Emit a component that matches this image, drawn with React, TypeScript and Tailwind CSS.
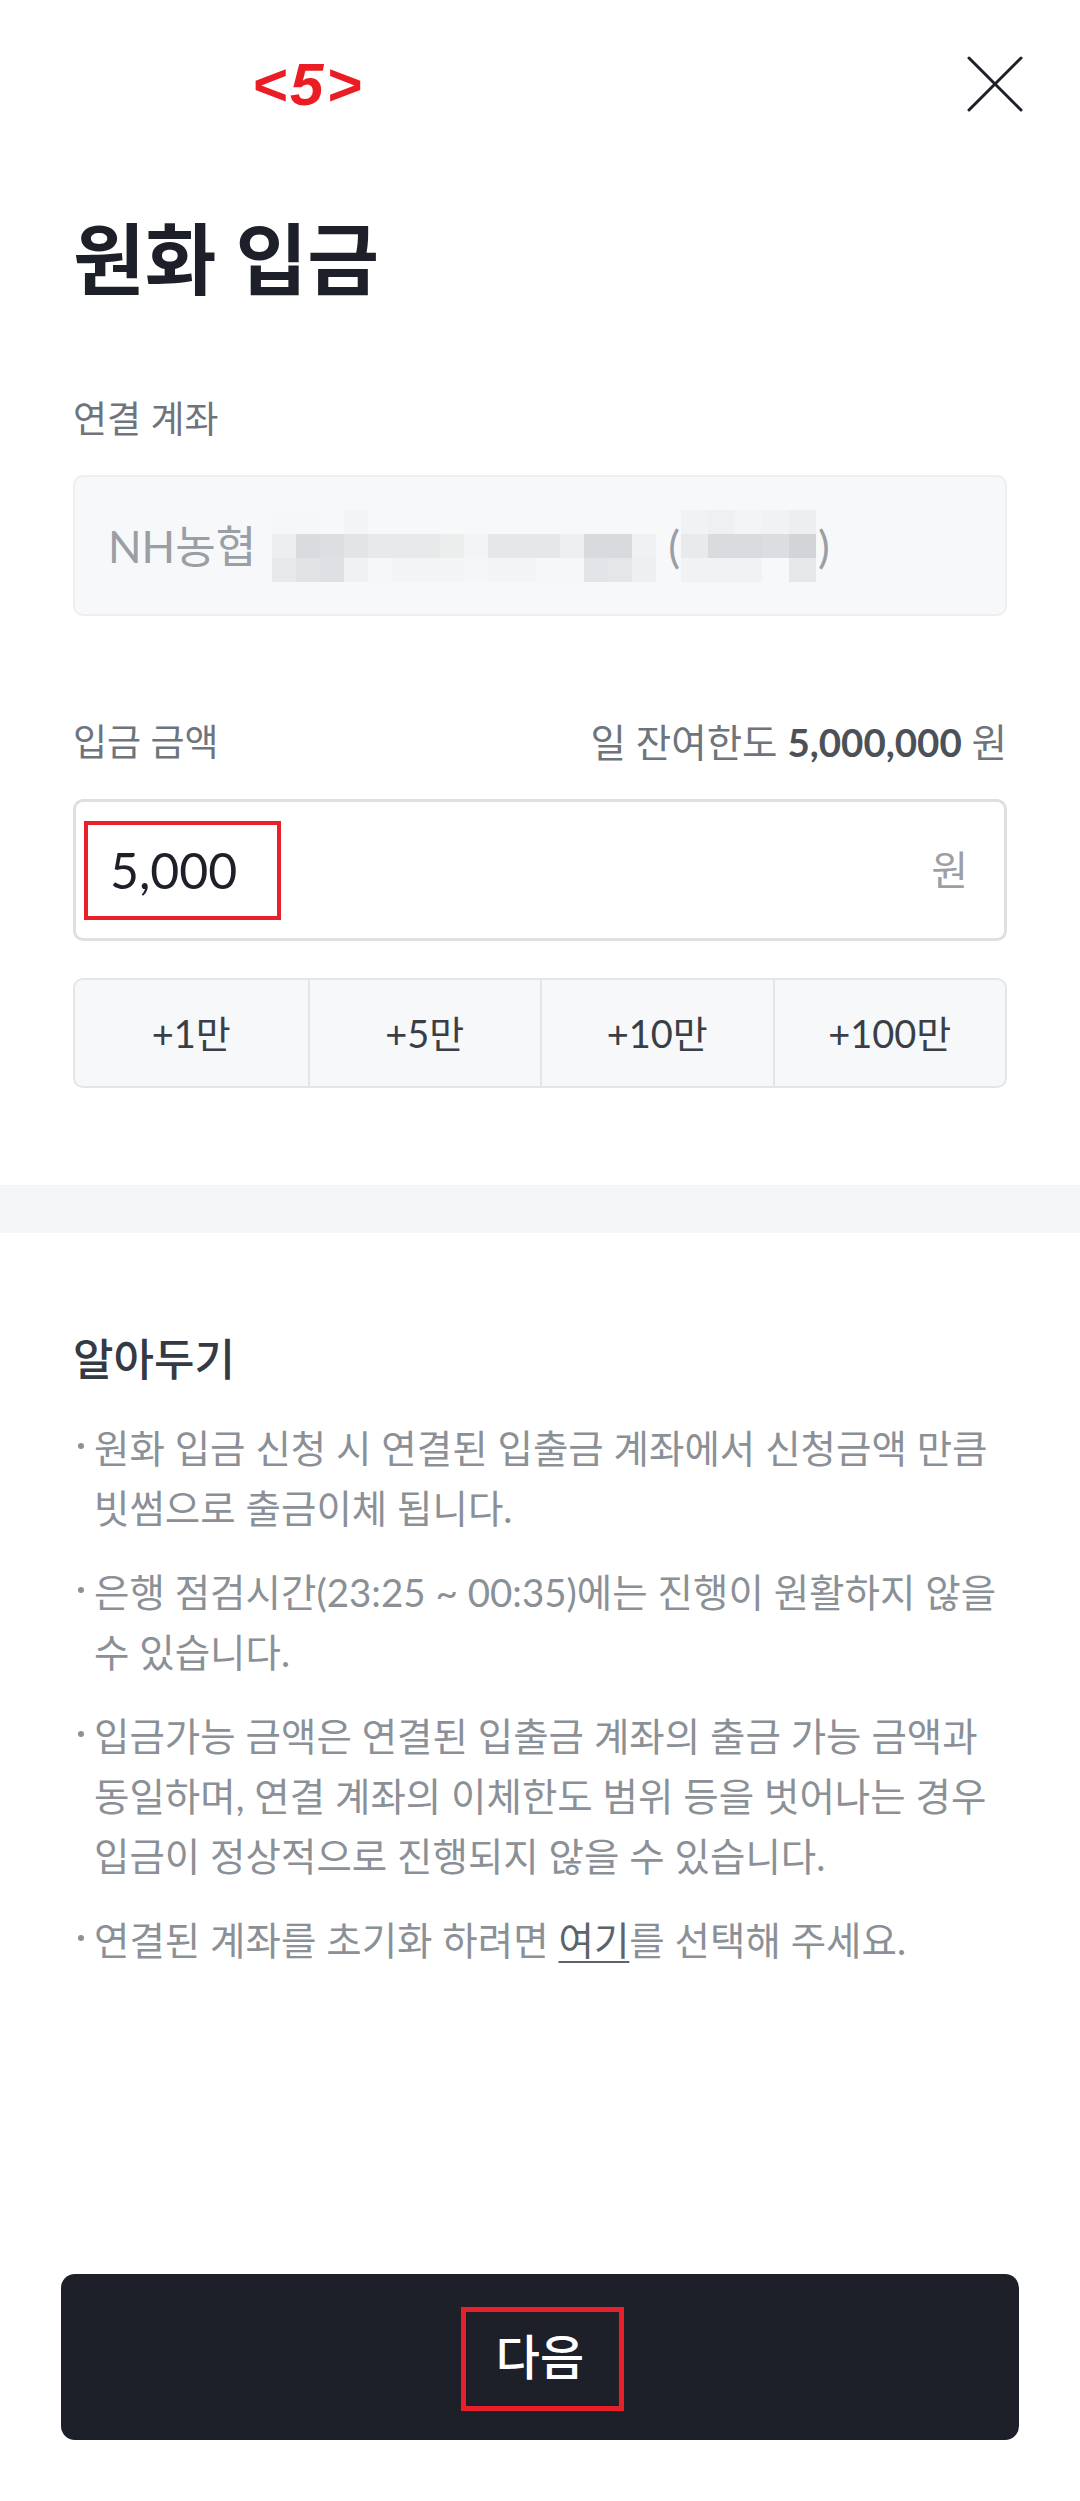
const MOSAIC_A: string[][] = [
  ['#f6f7f8', '#f6f7f8', '#f7f8f9', '#f3f4f5', '#f7f8f9', '#f7f8f9', '#f7f8f9', '#f7f8f9', '#f7f8f9', '#f7f8f9', '#f7f8f9', '#f7f8f9', '#f7f8f9', '#f7f8f9', '#f7f8f9', '#f7f8f9'],
  ['#eceef0', '#d9dbde', '#dcdee1', '#e2e4e6', '#e8e9eb', '#e8e9eb', '#e8e9eb', '#eceded', '#f3f4f5', '#e6e7e9', '#e6e7e9', '#e6e7e9', '#eeeff0', '#d8dadd', '#d8dadd', '#f0f1f2'],
  ['#e8e9eb', '#e1e3e5', '#dfe0e3', '#f0f1f2', '#f6f7f8', '#f3f4f5', '#f3f4f5', '#f3f4f5', '#f5f6f7', '#f3f4f5', '#f3f4f5', '#f6f7f8', '#f6f7f8', '#e3e4e7', '#e5e6e8', '#eeeff1'],
];

const MOSAIC_B: string[][] = [
  ['#f1f2f3', '#eff0f2', '#f3f4f5', '#f1f2f3', '#eceef0'],
  ['#e9eaec', '#d9dbde', '#d9dbde', '#dcdde0', '#d2d4d7'],
  ['#f1f2f3', '#f1f2f3', '#f1f2f3', '#f7f8f9', '#e7e8ea'],
];

const QUICK = ['+1만', '+5만', '+10만', '+100만'];

function Mosaic({ rows, cell }: { rows: string[][]; cell: string }) {
  return (
    <div className="flex flex-col">
      {rows.map((row, i) => (
        <div key={i} className="flex">
          {row.map((c, j) => (
            <div key={j} className={`h-[24px] ${cell}`} style={{ backgroundColor: c }} />
          ))}
        </div>
      ))}
    </div>
  );
}

function Notice({ lines }: { lines: React.ReactNode[] }) {
  return (
    <li className="flex">
      <span className="ml-[5px] mt-[25px] h-[6px] w-[6px] shrink-0 rounded-full bg-[#8b9097]" />
      <div className="ml-[10px] whitespace-nowrap">
        {lines.map((l, i) => (
          <div key={i}>{l}</div>
        ))}
      </div>
    </li>
  );
}

export default function App() {
  return (
    <div className="flex min-h-screen w-full flex-col bg-white font-[Lato,'Noto_Sans_CJK_KR',sans-serif]">
      {/* top bar */}
      <header className="relative flex h-[214px] justify-end pr-[57px] pt-[56px]">
        <span className="absolute left-[252px] top-[55px] font-['Liberation_Sans',sans-serif] text-[60px] font-bold italic leading-[60px] tracking-[3px] text-[#ea1d25]">
          &lt;5&gt;
        </span>
        <svg width="56" height="56" viewBox="0 0 56 56" fill="none">
          <path d="M2 2L54 54M54 2L2 54" stroke="#1d2029" strokeWidth="3" strokeLinecap="round" />
        </svg>
      </header>

      <main className="px-[73px]">
        <h1 className="text-[78px] font-bold leading-[90px] text-[#1d2029]">원화 입금</h1>

        <p className="mt-[91px] text-[37px] leading-[48px] text-[#6e747c]">연결 계좌</p>
        <div className="mt-[32px] flex h-[141px] items-center rounded-[10px] border-2 border-[#eceef1] bg-[#f7f8fa] pl-[33px] text-[44px] text-[#9a9fa6]">
          <span>NH농협</span>
          <div className="ml-[16px]">
            <Mosaic rows={MOSAIC_A} cell="w-[24px]" />
          </div>
          <span className="ml-[12px]">(</span>
          <div className="ml-[1px]">
            <Mosaic rows={MOSAIC_B} cell="w-[27px]" />
          </div>
          <span className="ml-[2px]">)</span>
        </div>

        <div className="mt-[102px] flex items-center justify-between leading-[48px] text-[#6e747c]">
          <span className="text-[37px]">입금 금액</span>
          <span className="text-[38.5px]">
            일 잔여한도 <b className="font-bold text-[#4b5157]">5,000,000</b> 원
          </span>
        </div>
        <div className="relative mt-[33px] flex h-[142px] items-center justify-between rounded-[10px] border-[3px] border-[#dfe0e3] pl-[34px] pr-[36px]">
          <span className="text-[50px] text-[#1d2029]">5,000</span>
          <span className="text-[40px] text-[#9ca0a6]">원</span>
          <div className="absolute left-[8px] top-[19px] h-[99px] w-[197px] border-4 border-[#e8202a]" />
        </div>

        <div className="mt-[37px] grid h-[110px] grid-cols-4 overflow-hidden rounded-[10px] border-2 border-[#e3e5e8] bg-[#f7f8fa]">
          {QUICK.map((q, i) => (
            <button
              key={q}
              className={`flex items-center justify-center text-[38px] text-[#3a3f47] ${i > 0 ? 'border-l-2 border-[#e3e5e8]' : ''}`}
            >
              {q}
            </button>
          ))}
        </div>
      </main>

      <div className="mt-[97px] h-[48px] w-full bg-[#f5f6f8]" />

      <section className="px-[73px]">
        <h2 className="mt-[98px] text-[44px] font-medium leading-[56px] text-[#343a43]">알아두기</h2>
        <ul className="mt-[31px] space-y-[24px] text-[38.5px] leading-[60px] text-[#8b9097]">
          <Notice lines={['원화 입금 신청 시 연결된 입출금 계좌에서 신청금액 만큼', '빗썸으로 출금이체 됩니다.']} />
          <Notice lines={['은행 점검시간(23:25 ~ 00:35)에는 진행이 원활하지 않을', '수 있습니다.']} />
          <Notice
            lines={[
              '입금가능 금액은 연결된 입출금 계좌의 출금 가능 금액과',
              '동일하며, 연결 계좌의 이체한도 범위 등을 벗어나는 경우',
              '입금이 정상적으로 진행되지 않을 수 있습니다.',
            ]}
          />
          <Notice
            lines={[
              <>
                연결된 계좌를 초기화 하려면{' '}
                <span className="text-[#5c636b] underline decoration-2 underline-offset-[6px]">여기</span>를 선택해 주세요.
              </>,
            ]}
          />
        </ul>
      </section>

      <div className="mt-auto px-[61px] pb-[61px]">
        <button className="relative flex h-[166px] w-full items-center justify-center rounded-[14px] bg-[#1d2029] text-[48px] font-medium text-white">
          다음
          <span className="absolute left-[400px] top-[33px] h-[104px] w-[163px] border-[5px] border-[#e8202a]" />
        </button>
      </div>
    </div>
  );
}
